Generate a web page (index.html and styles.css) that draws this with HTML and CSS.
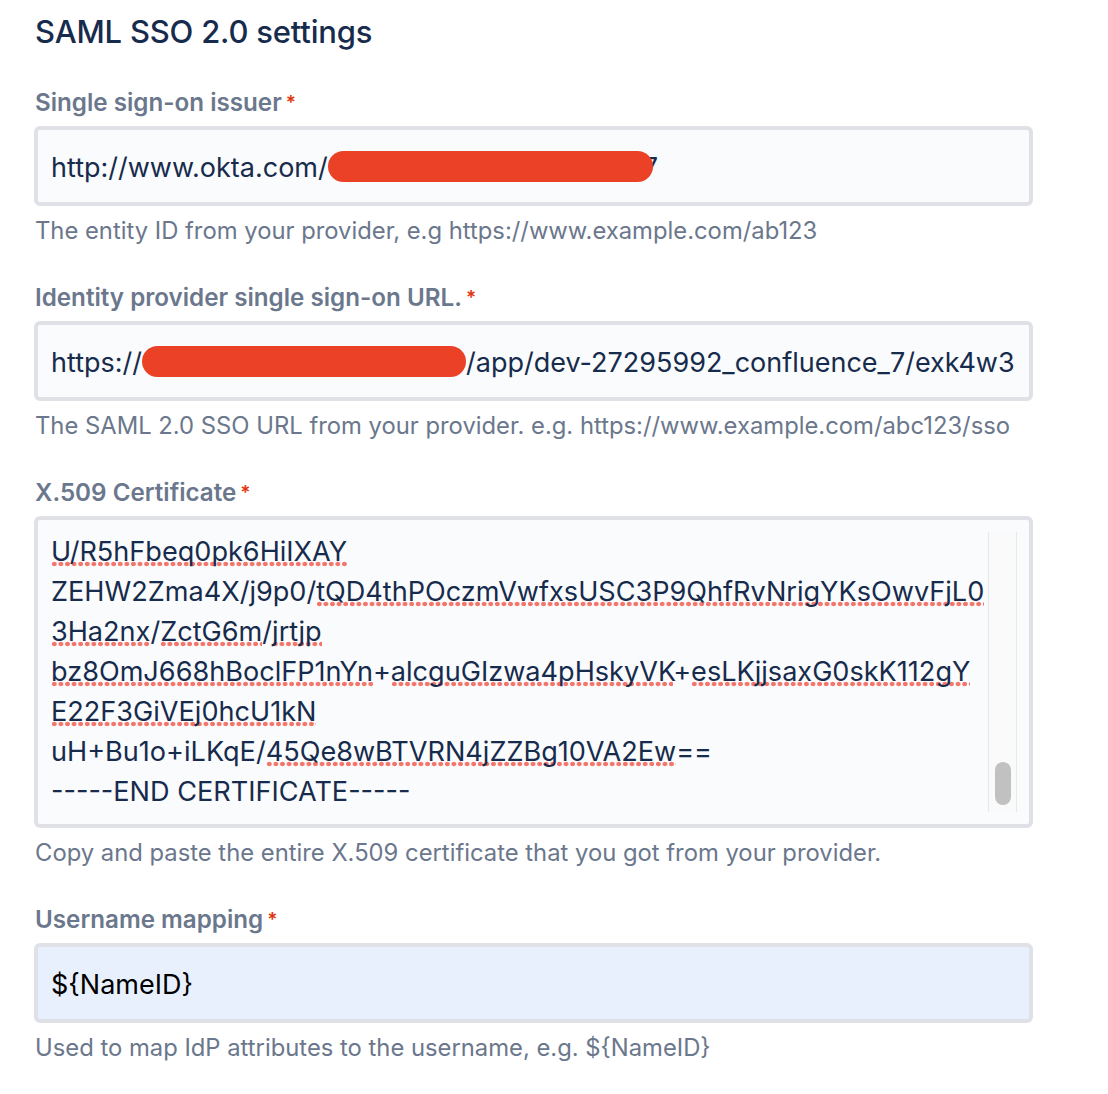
FILE: index.html
```html
<!DOCTYPE html>
<html lang="en">
<head>
  <meta charset="UTF-8">
  <meta name="viewport" content="width=device-width, initial-scale=1.0">
  <title>SAML SSO 2.0 settings</title>
  <link rel="stylesheet" href="styles.css">
</head>
<body>
  <div class="page">
    <h2 class="title">SAML SSO 2.0 settings</h2>

    <div class="field">
      <label class="label">Single sign-on issuer<span class="req">*</span></label>
      <div class="input"><span>http://www.okta.com/</span><span class="redact redact-issuer"></span><span class="tail">7</span></div>
      <p class="help">The entity ID from your provider, e.g https://www.example.com/ab123</p>
    </div>

    <div class="field">
      <label class="label">Identity provider single sign-on URL.<span class="req">*</span></label>
      <div class="input"><span>https://</span><span class="redact redact-url"></span><span>/app/dev-27295992_confluence_7/exk4w3</span></div>
      <p class="help">The SAML 2.0 SSO URL from your provider. e.g. https://www.example.com/abc123/sso</p>
    </div>

    <div class="field">
      <label class="label">X.509 Certificate<span class="req">*</span></label>
      <div class="cert">
        <div class="cert-lines">
          <div><span class="typo">U/R5hFbeq0pk6HiIXAY</span></div>
          <div>ZEHW2Zma4X/j9p0/<span class="typo">tQD4thPOczmVwfxsUSC3P9QhfRvNrigYKsOwvFjL0</span></div>
          <div><span class="typo">3Ha2nx</span>/<span class="typo">ZctG6m</span>/<span class="typo">jrtjp</span></div>
          <div><span class="typo">bz8OmJ668hBoclFP1nYn</span>+<span class="typo">alcguGIzwa4pHskyVK</span>+<span class="typo">esLKjjsaxG0skK112gY</span></div>
          <div><span class="typo">E22F3GiVEj0hcU1kN</span></div>
          <div>uH+Bu1o+iLKqE/<span class="typo">45Qe8wBTVRN4jZZBg10VA2Ew</span>==</div>
          <div>-----END CERTIFICATE-----</div>
        </div>
        <div class="scroll-track"><div class="scroll-thumb"></div></div>
      </div>
      <p class="help">Copy and paste the entire X.509 certificate that you got from your provider.</p>
    </div>

    <div class="field">
      <label class="label">Username mapping<span class="req">*</span></label>
      <div class="input input-filled">${NameID}</div>
      <p class="help">Used to map IdP attributes to the username, e.g. ${NameID}</p>
    </div>
  </div>
</body>
</html>
```

FILE: styles.css
```css
body {
  margin: 0;
  background: #fff;
  font-family: Inter, "Noto Sans", sans-serif;
  color: #172b4d;
}
.page {
  width: 999px;
  padding: 12px 0 0 34px;
  display: flex;
  flex-direction: column;
  gap: 39px;
}
.title {
  margin: 0 0 -2px 1px;
  font-size: 31px;
  line-height: 40px;
  font-weight: 500;
  letter-spacing: -0.2px;
}
.field {
  display: flex;
  flex-direction: column;
}
.label {
  display: block;
  margin-left: 1px;
  font-size: 24.2px;
  line-height: 28px;
  font-weight: 600;
  color: #6b778c;
}
.req {
  color: #de350b;
  margin-left: 4px;
  font-size: 19px;
  vertical-align: 2px;
}
.input {
  margin-top: 9px;
  height: 68px;
  line-height: 68px;
  padding: 4px 13px 0;
  border: 4px solid #dfe1e6;
  border-radius: 6px;
  background: #fafbfc;
  font-size: 27px;
  white-space: nowrap;
  overflow: hidden;
}
.input-filled {
  background: #e8f0fe;
  color: #000;
}
.redact {
  display: inline-block;
  height: 31px;
  border-radius: 16px;
  background: #eb4227;
  vertical-align: -5px;
}
.redact-issuer {
  width: 325px;
  position: relative;
  z-index: 1;
}
.redact-url {
  width: 324px;
}
.tail {
  margin-left: -10px;
}
.help {
  margin: 11px 0 0 1px;
  font-size: 23.8px;
  line-height: 28px;
  color: #6b778c;
}
.cert {
  margin-top: 9px;
  height: 280px;
  padding: 12px;
  border: 4px solid #dfe1e6;
  border-radius: 6px;
  background: #fafbfc;
  display: flex;
}
.cert-lines {
  flex: 1;
  padding-left: 1px;
  font-size: 27.1px;
  line-height: 40px;
  white-space: nowrap;
  overflow: hidden;
}
.typo {
  background-image: radial-gradient(circle, #f2766b 2.1px, transparent 2.6px);
  background-size: 6.6px 6px;
  background-repeat: repeat-x;
  background-position: 0 calc(100% - 1px);
}
.scroll-track {
  width: 27px;
  border-left: 1px solid #e8e8e8;
  border-right: 1px solid #e8e8e8;
  background: #fafafa;
  display: flex;
  flex-direction: column;
  justify-content: flex-end;
  align-items: center;
  padding-bottom: 7px;
}
.scroll-thumb {
  width: 16px;
  height: 43px;
  border-radius: 8px;
  background: #c1c1c1;
}
```
